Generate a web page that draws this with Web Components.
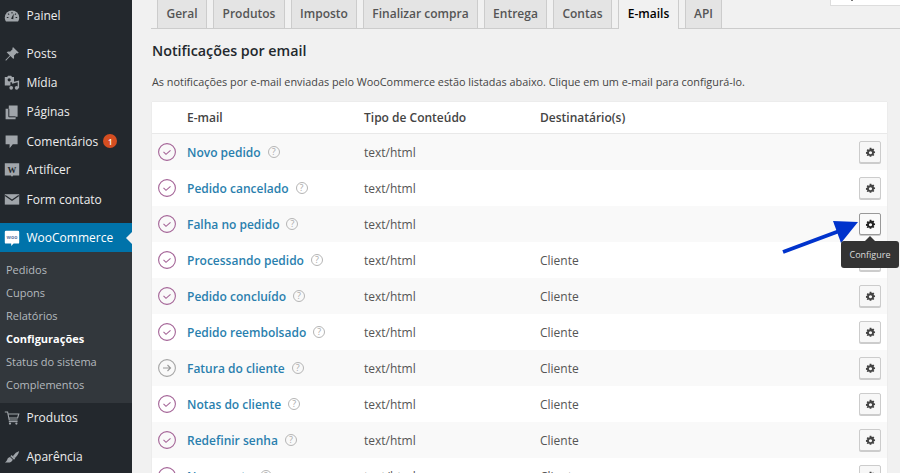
<!DOCTYPE html>
<html lang="pt-BR"><head><meta charset="utf-8"><title>Configurações</title>
<style>
html,body{margin:0;padding:0;background:#f1f1f1;overflow:hidden}
body{font-family:"Open Sans",sans-serif;font-size:12px;color:#444}
</style></head><body>
<wp-page>
  <wp-sidebar slot="side">
    <wp-item icon="gauge" label="Painel"></wp-item>
    <wp-item class="sep" icon="pin" label="Posts"></wp-item>
    <wp-item icon="media" label="Mídia"></wp-item>
    <wp-item icon="pages" label="Páginas"></wp-item>
    <wp-item icon="comment" label="Comentários" badge="1" style="padding-top:1px;box-sizing:border-box"></wp-item>
    <wp-item icon="wbox" label="Artificer"></wp-item>
    <wp-item icon="mail" label="Form contato" style="padding-top:1px;box-sizing:border-box"></wp-item>
    <wp-item class="sep2" icon="woo" label="WooCommerce" current></wp-item>
    <wp-submenu>
      <span>Pedidos</span><span>Cupons</span><span>Relatórios</span><b>Configurações</b><span>Status do sistema</span><span>Complementos</span>
    </wp-submenu>
    <wp-item icon="cart" label="Produtos"></wp-item>
    <wp-item class="sep2" icon="brush" label="Aparência"></wp-item>
  </wp-sidebar>
  <wp-tabs>
    <wp-tab w="50">Geral</wp-tab><wp-tab w="72">Produtos</wp-tab><wp-tab w="66">Imposto</wp-tab><wp-tab w="115">Finalizar compra</wp-tab><wp-tab w="63">Entrega</wp-tab><wp-tab w="59">Contas</wp-tab><wp-tab w="61" active>E-mails</wp-tab><wp-tab w="37">API</wp-tab>
  </wp-tabs>
  <wp-section heading="Notificações por email" desc="As notificações por e-mail enviadas pelo WooCommerce estão listadas abaixo. Clique em um e-mail para configurá-lo.">
    <wp-row head name="E-mail" type="Tipo de Conteúdo" to="Destinatário(s)"></wp-row>
    <wp-row name="Novo pedido" type="text/html" odd></wp-row>
    <wp-row name="Pedido cancelado" type="text/html"></wp-row>
    <wp-row name="Falha no pedido" type="text/html" odd hot></wp-row>
    <wp-row name="Processando pedido" type="text/html" to="Cliente"></wp-row>
    <wp-row name="Pedido concluído" type="text/html" to="Cliente" odd></wp-row>
    <wp-row name="Pedido reembolsado" type="text/html" to="Cliente"></wp-row>
    <wp-row name="Fatura do cliente" type="text/html" to="Cliente" odd manual></wp-row>
    <wp-row name="Notas do cliente" type="text/html" to="Cliente"></wp-row>
    <wp-row name="Redefinir senha" type="text/html" to="Cliente" odd></wp-row>
    <wp-row name="Nova conta" type="text/html" to="Cliente"></wp-row>
  </wp-section>
  <wp-overlay></wp-overlay>
</wp-page>
<script>
const ICONS={
gauge:'<path d="M1 12a9 9 0 0 1 18 0c0 2-.6 3.600-1.500 5h-15C1.600 15.600 1 14 1 12z" fill="currentColor"/><path d="M10 5v2M5 7l1.400 1.400M15 7l-1.400 1.400M3.500 12h2M14.500 12h2" stroke="#23282d" stroke-width="1.300"/><path d="M8.800 13.500l3.400-6.500-.6 7.200z" fill="#23282d"/>',
pin:'<path d="M11.500 1.500l7 7-1.600.9-1-.6-3.600 3.400c.6 1.600.4 3-.5 4.200L8 12.500 2.500 18.300 1.700 17.500 7.300 12l-4-4.200c1.200-1 2.600-1.200 4.200-.6l3.400-3.600-.7-1z" fill="currentColor"/>',
media:'<path d="M1 2.500h3l1-1.500h4l1 1.500h2.500v6.500H8v4H1z" fill="currentColor"/><circle cx="6.500" cy="6" r="2" fill="#23282d"/><path d="M10 10l8-2v8.500" fill="none" stroke="currentColor" stroke-width="1.800"/><circle cx="9" cy="16" r="2.300" fill="currentColor"/><circle cx="15.800" cy="16" r="2.300" fill="currentColor"/>',
pages:'<path d="M6 2h11v14h-2.500v3H2V6h4z" fill="currentColor"/><path d="M6 6v10h8.500" fill="none" stroke="#23282d" stroke-width="1.200"/>',
comment:'<path d="M2 3h15v11h-6l-4 5v-5H2z" fill="currentColor"/>',
wbox:'<path d="M1 1.500h18v15.500h-7.500L10 18.500 8.500 17H1z" fill="currentColor"/><text x="10" y="13.500" text-anchor="middle" font-family="Liberation Serif,serif" font-weight="700" font-size="11" fill="#23282d">W</text>',
mail:'<path d="M1 4h18v13H1z" fill="currentColor"/><path d="M1.500 5.500L10 11.500l8.500-6" fill="none" stroke="#23282d" stroke-width="1.600"/>',
woo:'<path d="M2.500 1h15A1.500 1.500 0 0 1 19 2.500v13a1.500 1.500 0 0 1-1.500 1.500H12l-3 3v-3H2.500A1.500 1.500 0 0 1 1 15.500v-13A1.500 1.500 0 0 1 2.500 1z" fill="#fff"/><text x="10" y="11" text-anchor="middle" font-family="Open Sans,sans-serif" font-weight="700" font-size="6.500" fill="#6a7fa8">woo</text>',
cart:'<path d="M1 2.500h3.500l2 10h10.500M5 5h13.500L17 10H6" fill="none" stroke="currentColor" stroke-width="1.400"/><path d="M6 14.500h11" stroke="currentColor" stroke-width="1.400"/><circle cx="7.500" cy="17" r="1.400" fill="currentColor"/><circle cx="15.500" cy="17" r="1.400" fill="currentColor"/>',
brush:'<path d="M11 9l3-3.500c1-1 2.500-1.800 5-3-.8 2.800-1.500 4.300-2.500 5.500L13.500 11.500z" fill="currentColor"/><path d="M9.500 7.500l4.500 4.500-1.500 1.500-4.500-4.500z" fill="currentColor"/><path d="M7.500 10l3.500 3.500c-1 2.500-3.500 3.500-5.500 3.500H1c1.500-1 2.500-2 3-3.500.4-1.800 1.500-3 3.500-3.500z" fill="currentColor"/>'
};
function el(tag,html){customElements.define(tag,class extends HTMLElement{
  connectedCallback(){ if(this.shadowRoot)return; const s=this.attachShadow({mode:'open'}); s.innerHTML=typeof html==='function'?html(this):html;} });}

el('wp-page',`<style>:host{display:grid;grid-template-columns:132px 1fr;width:900px;height:473px;overflow:hidden;position:relative}
main{padding:0 0 0 20px;min-width:0}
.search{position:absolute;right:-2px;top:-1px;width:72px;height:7px;background:#fff;border:1px solid #ddd;box-sizing:border-box}
.search i{position:absolute;left:20px;top:0;width:2px;height:1px;background:#777}</style>
<slot name="side"></slot><main><slot></slot></main><div class="search"><i></i></div>`);

el('wp-sidebar',`<style>:host{display:flex;flex-direction:column;background:#23282d;height:473px;padding-top:1px;box-sizing:border-box;overflow:hidden}
::slotted(.sep){margin-top:9px}::slotted(.sep2){margin-top:10px}</style><slot></slot>`);

el('wp-item',h=>`<style>:host{display:flex;align-items:center;height:29px;flex:none;color:#eee;background:${h.hasAttribute('current')?'#0073aa':'transparent'};position:relative;font-size:12px;${h.hasAttribute('current')?'color:#fff;':''}}
svg{width:16px;height:16px;margin:0 7px 0 3.500px;color:${h.hasAttribute('current')?'#fff':'#a0a5aa'};flex:none}
.b{margin-left:5px;width:14px;height:14px;border-radius:50%;background:#d54e21;color:#fff;font-size:8px;font-weight:600;display:flex;align-items:center;justify-content:center}
.c{position:absolute;right:0;top:9px;border:6px solid transparent;border-right-color:#f1f1f1;border-left-width:0}
</style><svg viewBox="0 0 20 20">${ICONS[h.getAttribute('icon')]}</svg><span>${h.getAttribute('label')}</span>${h.getAttribute('badge')?`<span class="b">${h.getAttribute('badge')}</span>`:''}${h.hasAttribute('current')?'<i class="c"></i>':''}`);

el('wp-submenu',`<style>:host{display:flex;flex-direction:column;background:#32373c;padding:5.500px 0 7.500px 6px;flex:none;font-size:11px;color:#b4b9be}
::slotted(*){display:flex;align-items:center;height:23px;white-space:nowrap}
::slotted(b){color:#fff;font-weight:700}</style><slot></slot>`);

el('wp-tabs',`<style>:host{display:flex;gap:6px;height:28px;margin-left:-1px;padding-left:6px;border-bottom:1px solid #ccc}</style><slot></slot>`);

el('wp-tab',h=>`<style>:host{display:flex;align-items:center;justify-content:center;flex:none;box-sizing:border-box;width:${h.getAttribute('w')}px;height:${h.hasAttribute('active')?29:28}px;padding-bottom:${h.hasAttribute('active')?3:2}px;
background:${h.hasAttribute('active')?'#f1f1f1':'#e4e4e4'};border:1px solid #ccc;border-top:0;border-bottom:0;
color:${h.hasAttribute('active')?'#000':'#555'};font-size:12px;font-weight:600;white-space:nowrap}</style><slot></slot>`);

el('wp-section',h=>`<style>:host{display:block;margin-right:13px}
h2{font-size:14.300px;line-height:20px;font-weight:600;color:#23282d;margin:12px 0 0}
p{font-size:10.850px;line-height:16px;margin:13px 0 0;color:#444;white-space:nowrap}
.t{margin-top:12px;background:#fff;box-shadow:0 0 1px rgba(0,0,0,.12)}</style>
<h2>${h.getAttribute('heading')}</h2><p>${h.getAttribute('desc')}</p><div class="t"><slot></slot></div>`);

const CHECK='<circle cx="9" cy="9" r="8.400" fill="none" stroke="#a46497" stroke-width="1.100"/><path d="M5.500 8.800l2.500 2.500 4.500-4" fill="none" stroke="#a46497" stroke-width="1.100"/>';
const ARROW='<circle cx="9" cy="9" r="8.400" fill="none" stroke="#a5a5a5" stroke-width="1.100"/><path d="M5 9h7M9.500 6l3 3-3 3" fill="none" stroke="#999" stroke-width="1.100"/>';
const GEAR=c=>`<path fill="${c}" fill-rule="evenodd" d="M6.800 1h2.400l.3 1.600 1 .4L11.900 2l1.700 1.700-1 1.400.4 1 1.600.3v2.400l-1.600.3-.4 1 1 1.400-1.700 1.700-1.400-1-1 .4-.3 1.600H6.800l-.3-1.600-1-.4-1.400 1L2.400 12.400l1-1.400-.4-1L1.400 9.700V7.300L3 7l.4-1-1-1.400L4.100 2.900l1.400 1 1-.4zM8 6a2.300 2.300 0 1 0 .01 0z"/>`;

el('wp-row',h=>{
 const head=h.hasAttribute('head');
 const odd=h.hasAttribute('odd');
 const hot=h.hasAttribute('hot');
 return `<style>:host{display:grid;grid-template-columns:35px 177px 176px 1fr 22px;align-items:center;padding-right:6px;box-sizing:border-box;height:${head?32:36}px;
 background:${head?'#fff':odd?'#f9f9f9':'#fff'};${head?'border-bottom:1px solid #e9e9e9;':''}font-size:12px;color:#555}
 :host([head]) div{font-weight:600;color:#444}
 .i{width:18px;height:18px;margin-left:6px;display:block}
 .n{display:flex;align-items:center;gap:7px;color:#2a7fae;font-weight:600;white-space:nowrap}
 .q{width:12px;height:12px;border:1px solid #b5b5b5;border-radius:50%;box-sizing:border-box;font-size:9px;line-height:10px;text-align:center;color:#aaa;font-weight:400}
 .g{width:22px;height:22px;box-sizing:border-box;border:1px solid ${hot?'#999':'#ccc'};border-radius:2px;background:${hot?'#fafafa':'#f7f7f7'};box-shadow:0 1px 0 #ccc;display:flex;align-items:center;justify-content:center}
 .g svg{width:11px;height:11px}</style>
 ${head?'<div></div>':`<svg class="i" viewBox="0 0 18 18">${h.hasAttribute('manual')?ARROW:CHECK}</svg>`}
 <div class="n" ${head?'style="color:#444"':''}>${h.getAttribute('name')}${head?'':'<span class="q">?</span>'}</div>
 <div>${h.getAttribute('type')}</div><div>${h.getAttribute('to')||''}</div>
 ${head?'<div></div>':`<div class="g"><svg viewBox="0 0 16 16">${GEAR(hot?'#222':'#444')}</svg></div>`}`;
});

el('wp-overlay',`<style>:host{position:absolute;left:0;top:0;width:900px;height:473px;pointer-events:none}
svg{position:absolute;left:0;top:0}
.tip{position:absolute;left:841px;top:241px;width:58px;height:27px;background:#333;border-radius:3px;color:#ddd;font-size:9px;display:flex;align-items:center;justify-content:center}
.tip::before{content:"";position:absolute;left:24px;top:-5px;border:5px solid transparent;border-top:0;border-bottom-color:#333}
</style><svg width="900" height="473"><path d="M783 252L842 230" stroke="#0033cc" stroke-width="4" fill="none"/><path d="M833 221L858 222L841 243z" fill="#0033cc"/></svg><div class="tip">Configure</div>`);
</script>
</body></html>
